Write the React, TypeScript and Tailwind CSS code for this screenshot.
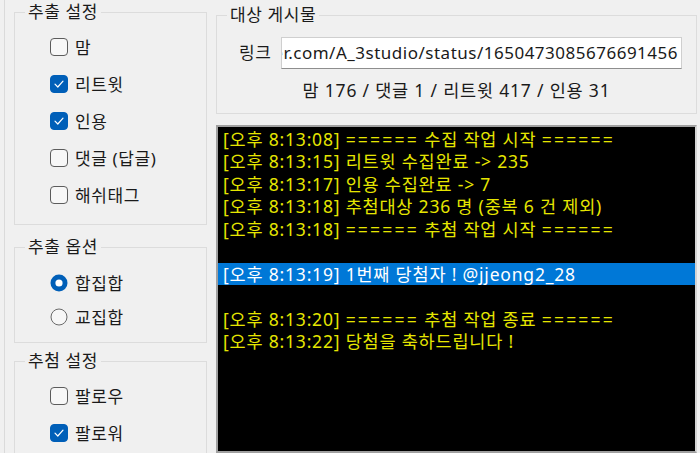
import React from "react";

const FONT = { fontFamily: '"Noto Sans", "Noto Sans CJK KR", sans-serif' };

const LOG: { text: string; selected?: boolean }[] = [
  { text: "[오후 8:13:08] ====== 수집 작업 시작 ======" },
  { text: "[오후 8:13:15] 리트윗 수집완료 -> 235" },
  { text: "[오후 8:13:17] 인용 수집완료 -> 7" },
  { text: "[오후 8:13:18] 추첨대상 236 명 (중복 6 건 제외)" },
  { text: "[오후 8:13:18] ====== 추첨 작업 시작 ======" },
  { text: "" },
  { text: "[오후 8:13:19] 1번째 당첨자 ! @jjeong2_28", selected: true },
  { text: "" },
  { text: "[오후 8:13:20] ====== 추첨 작업 종료 ======" },
  { text: "[오후 8:13:22] 당첨을 축하드립니다 !" },
];

function CheckBox({ checked }: { checked?: boolean }) {
  return (
    <svg width="18" height="18" viewBox="0 0 18 18" className="shrink-0">
      {checked ? (
        <>
          <rect x="0.5" y="0.5" width="17" height="17" rx="3.5" fill="#005fb8" stroke="#005fb8" />
          <path d="M5 9.2 L7.8 12 L13 6.2" fill="none" stroke="#fff" strokeWidth="1.2" strokeLinecap="round" strokeLinejoin="round" />
        </>
      ) : (
        <rect x="0.5" y="0.5" width="17" height="17" rx="3.5" fill="#f7f7f7" stroke="#5c5c5c" />
      )}
    </svg>
  );
}

function Radio({ checked }: { checked?: boolean }) {
  return (
    <svg width="18" height="18" viewBox="0 0 18 18" className="shrink-0">
      {checked ? (
        <>
          <circle cx="9" cy="9" r="8.5" fill="#005fb8" />
          <circle cx="9" cy="9" r="3.6" fill="#fff" />
        </>
      ) : (
        <circle cx="9" cy="9" r="8" fill="#f7f7f7" stroke="#6a6a6a" />
      )}
    </svg>
  );
}

function Option({ label, checked, radio }: { label: string; checked?: boolean; radio?: boolean }) {
  return (
    <div className="flex items-center gap-[7px] pl-[35px] text-[17px] tracking-[0.6px] text-[#1a1a1a]">
      {radio ? <Radio checked={checked} /> : <CheckBox checked={checked} />}
      <span className="leading-none">{label}</span>
    </div>
  );
}

function Group({ title, className, children }: { title: string; className?: string; children: React.ReactNode }) {
  return (
    <fieldset className={"shrink-0 border border-[#dcdcdc] " + (className ?? "")}>
      <legend className="ml-[10px] px-[3px] text-[17px] leading-[24px] tracking-[0.6px] text-[#1a1a1a]">{title}</legend>
      {children}
    </fieldset>
  );
}

// '=' runs are wider in the original font
function LogText({ text }: { text: string }) {
  return (
    <>
      {text.split(/(=+)/).map((part, i) =>
        part.startsWith("=") ? (
          <span key={i} className="tracking-[2.2px]">{part}</span>
        ) : (
          <span key={i}>{part}</span>
        ),
      )}
    </>
  );
}

export default function App() {
  return (
    <div className="flex h-[453px] w-[700px] overflow-hidden bg-[#f0f0f0]" style={FONT}>
      <div className="ml-[4px] flex w-[203px] shrink-0 flex-col border-l border-[#dadada] pl-[9px]">
        <Group title="추출 설정" className="h-[225px]">
          <div className="flex flex-col gap-[19px] pt-[14px]">
            <Option label="맘" />
            <Option label="리트윗" checked />
            <Option label="인용" checked />
            <Option label="댓글 (답글)" />
            <Option label="해쉬태그" />
          </div>
        </Group>
        <Group title="추출 옵션" className="mt-[10px] h-[108px]">
          <div className="flex flex-col gap-[16px] pt-[15px]">
            <Option label="합집합" checked radio />
            <Option label="교집합" radio />
          </div>
        </Group>
        <Group title="추첨 설정" className="mt-[6px] h-[140px]">
          <div className="flex flex-col gap-[19px] pt-[14px]">
            <Option label="팔로우" />
            <Option label="팔로워" checked />
          </div>
        </Group>
      </div>

      <div className="ml-[9px] flex w-[481px] shrink-0 flex-col">
        <Group title="대상 게시물" className="mt-[3px] h-[111px]">
          <div className="flex items-center pt-[10px]">
            <span className="ml-[22px] w-[42px] text-[17px] tracking-[0.6px] text-[#1a1a1a]">링크</span>
            <div className="flex h-[32px] w-[401px] items-center justify-end overflow-hidden whitespace-nowrap border border-[#cfcfcf] border-b-[#8e8e8e] bg-white pr-[3px] text-[17px] tracking-[0.5px] text-[#1a1a1a]">
              <span>https://twitter.com/A_3studio/status/1650473085676691456</span>
            </div>
          </div>
          <div className="mt-[8px] text-center text-[17.5px] tracking-[0.8px] text-[#1a1a1a]">맘 176 / 댓글 1 / 리트윗 417 / 인용 31</div>
        </Group>
        <div className="mt-[11px] flex-1 border-2 border-[#a0a0a0] border-r-[#d4d4d4] bg-black pt-[0.5px]">
          {LOG.map((line, i) => (
            <div
              key={i}
              className={
                "h-[22.5px] whitespace-nowrap pl-[5px] text-[17.5px] leading-[22.5px] tracking-[0.8px] " +
                (line.selected ? "bg-[#0078d7] text-white" : "text-[#e6e600]")
              }
            >
              <LogText text={line.text} />
            </div>
          ))}
        </div>
      </div>
    </div>
  );
}
